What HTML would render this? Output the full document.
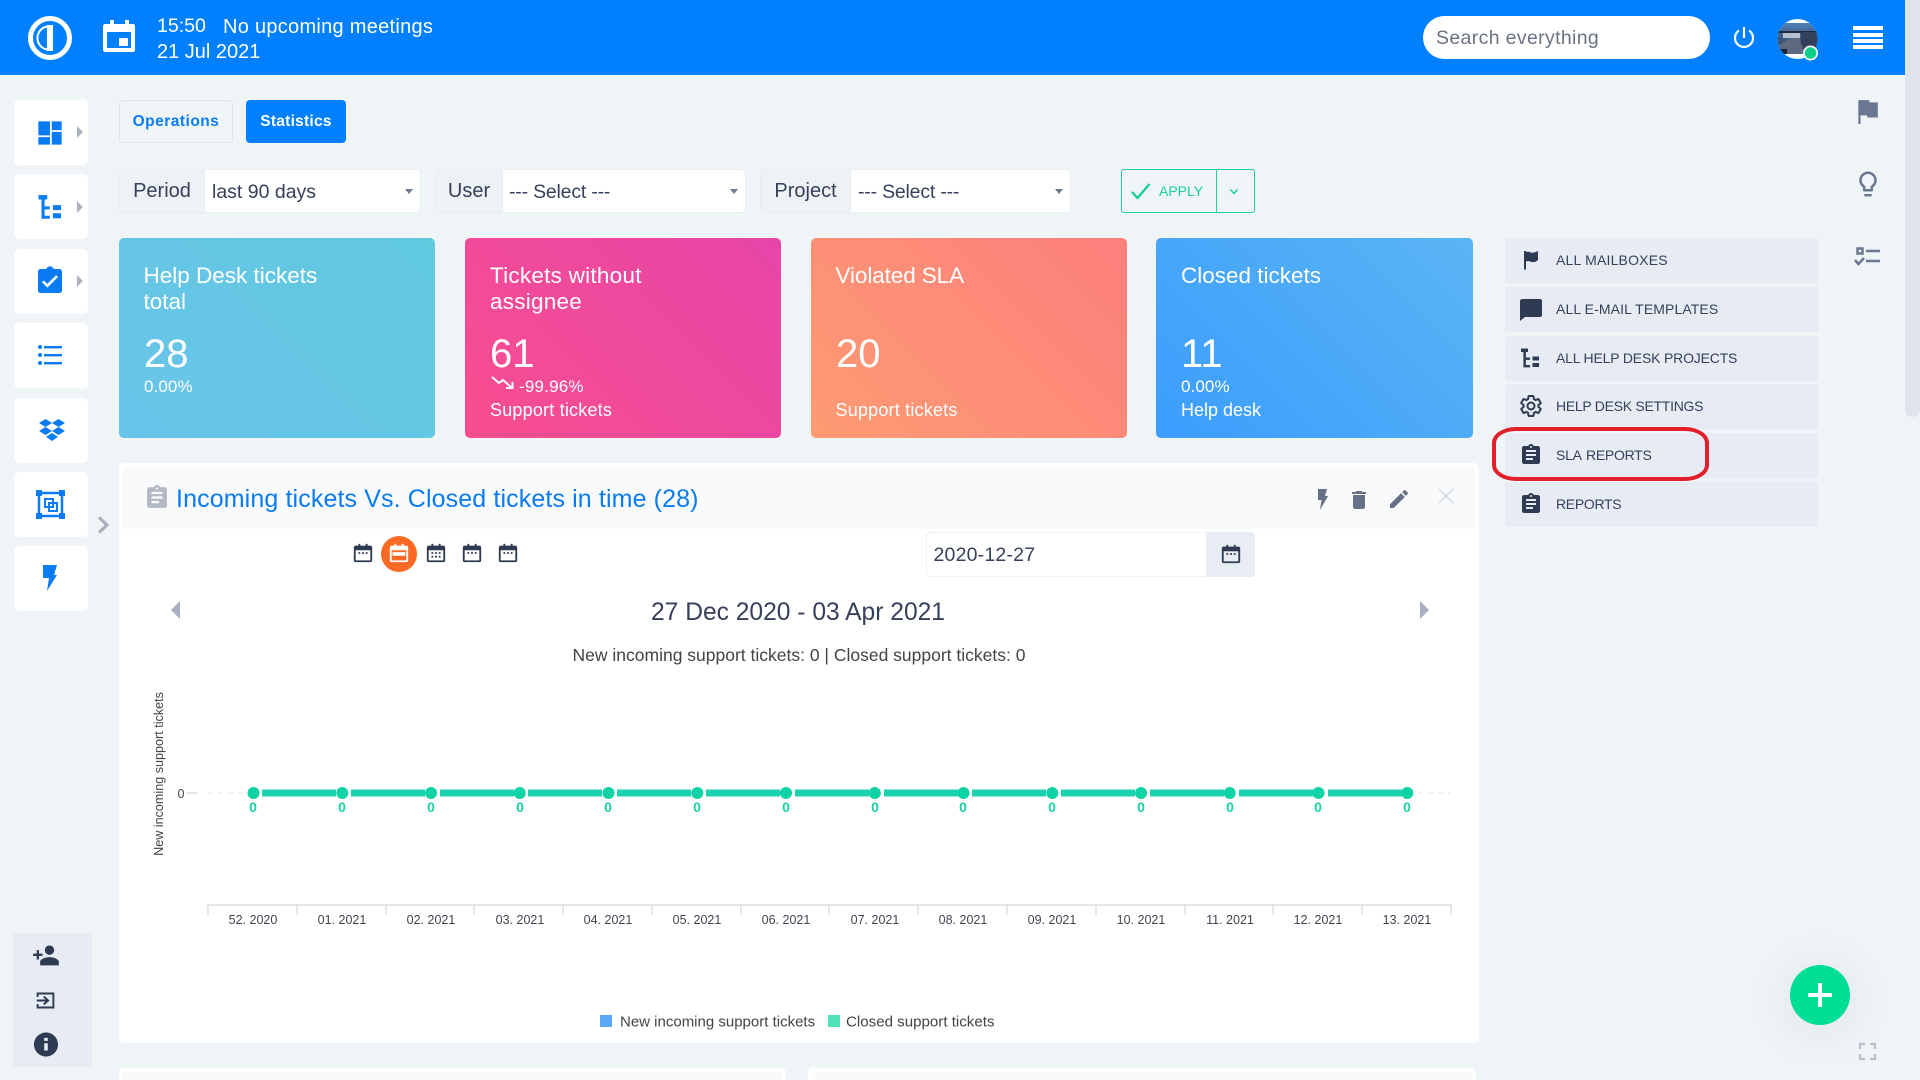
<!DOCTYPE html>
<html><head><meta charset="utf-8"><title>Dashboard</title>
<style>
*{box-sizing:border-box}
html,body{margin:0;padding:0;width:1920px;height:1080px;overflow:hidden;background:#eff4f7;font-family:"Liberation Sans",sans-serif;color:#2f3b52}
.a{position:absolute}
.t{position:absolute;white-space:nowrap;line-height:1}
svg{position:absolute;overflow:visible}
.side{position:absolute;left:14px;width:74px;height:65px;background:#fff;border-radius:5px}
.tri{position:absolute;left:77px;width:0;height:0;border-left:6px solid #adb3c1;border-top:6px solid transparent;border-bottom:6px solid transparent}
.card{position:absolute;top:238px;height:200px;width:316px;border-radius:5px;color:#fff}
.card .h{position:absolute;left:25px;top:24.500px;font-size:22.500px;line-height:26.500px;white-space:nowrap}
.card .v{position:absolute;left:25px;top:92.500px;font-size:40px;line-height:46px}
.card .p{position:absolute;left:25px;top:139px;font-size:17px;line-height:20px;white-space:nowrap;letter-spacing:.1px}
.card .s{position:absolute;left:25px;top:162px;font-size:18px;line-height:20px;white-space:nowrap;letter-spacing:.2px}
.lab{position:absolute;top:169px;height:44px;background:#eef2f6;border:1px solid #e8edf2;border-radius:4px 0 0 4px;font-size:20px;line-height:42px;text-align:center;color:#36405a}
.sel{position:absolute;top:169px;height:44px;background:#fff;border:1px solid #eaeef3;border-left:0;border-radius:0 4px 4px 0;font-size:19.500px;line-height:44px;padding-left:7px;color:#36405a;white-space:nowrap}
.sel i{position:absolute;right:7px;top:19px;width:0;height:0;border-top:5px solid #6f7b93;border-left:4.500px solid transparent;border-right:4.500px solid transparent}
.mi{position:absolute;left:1505px;width:313px;height:45px;background:#e7ebf3;border-radius:2px;font-size:14px;line-height:45px;padding-left:51px;color:#36405a;white-space:nowrap}
.mi svg{left:14px;top:10px}
.xl{position:absolute;top:913px;width:80px;text-align:center;font-size:12.500px;color:#3f4550;line-height:14px}
.zl{position:absolute;top:800px;width:20px;text-align:center;font-size:14px;font-weight:bold;color:#1ad1a5;line-height:14px}
</style></head>
<body>
<svg width="0" height="0" style="position:absolute">
<defs>
<symbol id="cal" viewBox="0 0 24 24"><path fill="#2f3b52" d="M4 4h3V2h2v2h6V2h2v2h3c1.100 0 2 .9 2 2v14c0 1.100-.9 2-2 2H4c-1.100 0-2-.9-2-2V6c0-1.100.9-2 2-2zm0 5v11h16V9H4z"/><path fill="#2f3b52" d="M7 11h2v2H7zM11 11h2v2h-2zM15 11h2v2h-2z"/></symbol>
<symbol id="asg" viewBox="0 0 24 24"><path d="M19 3h-4.180C14.400 1.840 13.300 1 12 1s-2.400.84-2.820 2H5c-1.100 0-2 .9-2 2v14c0 1.100.9 2 2 2h14c1.100 0 2-.9 2-2V5c0-1.100-.9-2-2-2zm-7 0c.55 0 1 .45 1 1s-.45 1-1 1-1-.45-1-1 .45-1 1-1zm2 14H7v-2h7v2zm3-4H7v-2h10v2zm0-4H7V7h10v2z"/></symbol>
<symbol id="tree" viewBox="0 0 24 24"><path d="M2 2.500h7V6H6.900v5.500H11v2.400H6.900V19H11v2.400H4.400V6H2zM13.500 10.500H20v4h-6.500zM13.500 17H20v4h-6.500z"/></symbol>
</defs></svg>

<!-- header -->
<div class="a" style="left:0;top:0;width:1905px;height:75px;background:#0080ff"></div>
<svg style="left:27px;top:15px" width="46" height="46" viewBox="0 0 46 46"><circle cx="23" cy="23" r="19.500" fill="none" stroke="#fff" stroke-width="5"/><path d="M20 11.500a11.700 11.700 0 0 0 0 23" fill="none" stroke="#fff" stroke-width="2"/><rect x="20" y="10" width="6" height="26" fill="#fff"/></svg>
<svg style="left:100px;top:18px" width="38" height="36" viewBox="0 0 38 36"><path fill="#fff" d="M5 6h5V2h4v4h11V2h4v4h4c1 0 2 1 2 2v24c0 1-1 2-2 2H5c-1 0-2-1-2-2V8c0-1 1-2 2-2zm2 8v16h24V14z"/><rect x="19" y="20" width="9" height="8" fill="#fff"/></svg>
<div class="t" style="left:157px;top:16.500px;font-size:19.500px;color:#fff">15:50</div>
<div class="t" style="left:223px;top:16.500px;font-size:20px;letter-spacing:.28px;color:#fff">No upcoming meetings</div>
<div class="t" style="left:157px;top:42px;font-size:20px;color:#fff">21 Jul 2021</div>
<div class="a" style="left:1423px;top:16px;width:287px;height:43px;background:#fff;border-radius:22px"></div>
<div class="t" style="left:1436px;top:29px;font-size:19.500px;letter-spacing:.35px;color:#6b7383">Search everything</div>
<svg style="left:1732px;top:25px" width="24" height="24" viewBox="0 0 24 24"><path d="M7 5.500a9 9 0 1 0 10 0" fill="none" stroke="#fff" stroke-width="2.200"/><path d="M12 2v11" stroke="#fff" stroke-width="2.200"/></svg>
<svg style="left:1777px;top:18px" width="42" height="44" viewBox="0 0 42 44"><defs><clipPath id="av"><circle cx="20.500" cy="21" r="20"/></clipPath><linearGradient id="sky" x1="0" y1="0" x2="0" y2="1"><stop offset="0" stop-color="#4f7fb8"/><stop offset="1" stop-color="#26364f"/></linearGradient></defs><g clip-path="url(#av)"><rect width="42" height="44" fill="#fff"/><rect y="5" width="42" height="31" fill="url(#sky)"/><rect y="13" width="42" height="2" fill="#1f2a40"/><rect x="6" y="15" width="17" height="5" fill="#b6c2d0"/><rect x="24" y="14" width="18" height="18" fill="#33405a"/><path d="M0 36V28l14-8h8l6 16z" fill="#5d6a80"/><rect x="0" y="31" width="10" height="5" fill="#1b2338"/></g><circle cx="33.500" cy="35" r="7.500" fill="#fff"/><circle cx="33.500" cy="35" r="5.800" fill="#0fcf8a"/></svg>
<div class="a" style="left:1853px;top:26px;width:30px;height:4px;background:#fff"></div>
<div class="a" style="left:1853px;top:32.500px;width:30px;height:4px;background:#fff"></div>
<div class="a" style="left:1853px;top:39px;width:30px;height:4px;background:#fff"></div>
<div class="a" style="left:1853px;top:45px;width:30px;height:4px;background:#fff"></div>

<!-- scrollbar -->
<div class="a" style="left:1905px;top:0;width:15px;height:417px;background:#dfe3ee;border-radius:0 0 8px 8px"></div>

<!-- left sidebar -->
<div class="side" style="top:100px"></div><div class="side" style="top:174px"></div><div class="side" style="top:249px"></div><div class="side" style="top:323px"></div><div class="side" style="top:398px"></div><div class="side" style="top:472px"></div><div class="side" style="top:546px"></div>
<div class="tri" style="top:126px"></div><div class="tri" style="top:201px"></div><div class="tri" style="top:275px"></div>
<svg style="left:36px;top:119px" width="28" height="28" viewBox="0 0 24 24" fill="#0a7bf2"><path d="M2 2h10v12H2zM2 15.500h10V22H2zM13.500 2H22v7.500h-8.500zM13.500 11H22v11h-8.500z"/></svg>
<svg style="left:35.500px;top:192px" width="30" height="30" viewBox="0 0 24 24" fill="#0a7bf2"><use href="#tree"/></svg>
<svg style="left:34px;top:265px" width="32" height="32" viewBox="0 0 24 24" fill="#0a7bf2"><path d="M19 3h-4.180C14.400 1.840 13.300 1 12 1s-2.400.84-2.820 2H5c-1.100 0-2 .9-2 2v14c0 1.100.9 2 2 2h14c1.100 0 2-.9 2-2V5c0-1.100-.9-2-2-2zm-9 14l-4-4 1.410-1.410L10 14.170l6.590-6.590L18 9z"/></svg>
<svg style="left:38px;top:345px" width="24" height="20" viewBox="0 0 24 20" fill="#0a7bf2"><circle cx="2" cy="2" r="2"/><circle cx="2" cy="10" r="2"/><circle cx="2" cy="18" r="2"/><rect x="6" y="1" width="18" height="2.400"/><rect x="6" y="9" width="18" height="2.400"/><rect x="6" y="17" width="18" height="2.400"/></svg>
<svg style="left:39px;top:419px" width="26" height="22" viewBox="0 0 26 22" fill="#0a7bf2"><path d="M6.500 0L13 4l-6.500 4L0 4zM19.500 0L26 4l-6.500 4L13 4zM6.500 8L13 12l-6.500 4L0 12zM19.500 8L26 12l-6.500 4L13 12zM13 14l6 3.800L13 22l-6-4.200z"/></svg>
<svg style="left:36px;top:490px" width="30" height="30" viewBox="0 0 30 30" fill="none" stroke="#0a7bf2"><rect x="3" y="3" width="23" height="23" stroke-width="2.500"/><rect x="9" y="9" width="8" height="8" stroke-width="2"/><rect x="13" y="13" width="8" height="8" stroke-width="2"/><g fill="#0a7bf2" stroke="none"><rect x="0" y="0" width="6" height="6"/><rect x="23" y="0" width="6" height="6"/><rect x="0" y="23" width="6" height="6"/><rect x="23" y="23" width="6" height="6"/></g></svg>
<svg style="left:43px;top:565px" width="14" height="26" viewBox="0 0 14 26" fill="#0a7bf2"><path d="M0 0h14l-3 10h3L4 26l2-13H0z"/></svg>
<svg style="left:97px;top:516px" width="14" height="18" viewBox="0 0 14 18" fill="none" stroke="#a9adbb" stroke-width="3"><path d="M2 1.500L10 9l-8 7.500"/></svg>

<div class="a" style="left:13px;top:933px;width:79px;height:134px;background:#e7ebf3;border-radius:3px"></div>
<svg style="left:32px;top:943px" width="28" height="26" viewBox="0 0 24 22" fill="#2f3b52"><path d="M15 10c2.210 0 4-1.790 4-4s-1.790-4-4-4-4 1.790-4 4 1.790 4 4 4zm-9-1V6H4v3H1v2h3v3h2v-3h3V9zm9 3c-2.670 0-8 1.340-8 4v3h16v-3c0-2.660-5.330-4-8-4z"/></svg>
<svg style="left:35px;top:990px" width="21" height="21" viewBox="0 0 24 24" fill="none" stroke="#2f3b52" stroke-width="2.200"><path d="M3 8V4h18v16H3v-4"/><path d="M2 12h12M10 7.500l5 4.500-5 4.500"/></svg>
<svg style="left:34px;top:1032px" width="24" height="25" viewBox="2 2 20 20" fill="#2f3b52"><path d="M12 2C6.480 2 2 6.480 2 12s4.480 10 10 10 10-4.480 10-10S17.520 2 12 2zm1.500 15h-3v-6h3zm0-8h-3V6.500h3z"/></svg>

<!-- tabs -->
<div class="a" style="left:119px;top:100px;width:114px;height:43px;border:1px solid #dfe5ec;border-radius:4px;color:#0a7bf2;font-size:15.500px;font-weight:bold;line-height:42px;text-align:center;letter-spacing:.5px">Operations</div>
<div class="a" style="left:246px;top:100px;width:100px;height:43px;background:#0080ff;border-radius:4px;color:#fff;font-size:15.500px;font-weight:bold;line-height:44px;text-align:center;letter-spacing:.25px">Statistics</div>

<!-- filters -->
<div class="lab" style="left:119px;width:86px">Period</div><div class="sel" style="left:205px;width:216px">last 90 days<i></i></div>
<div class="lab" style="left:435px;width:68px">User</div><div class="sel" style="left:503px;width:243px;padding-left:6px;letter-spacing:-.2px">--- Select ---<i></i></div>
<div class="lab" style="left:760px;width:91px">Project</div><div class="sel" style="left:851px;width:220px;letter-spacing:-.2px">--- Select ---<i></i></div>
<div class="a" style="left:1121px;top:169px;width:134px;height:44px;border:1px solid #1ecf9b;border-radius:3px"></div>
<div class="a" style="left:1216px;top:169px;width:1px;height:44px;background:#1ecf9b"></div>
<svg style="left:1131px;top:182px" width="20" height="18" viewBox="0 0 20 18" fill="none" stroke="#16cf95" stroke-width="2.300"><path d="M1 10l5.500 6L18.500 2"/></svg>
<div class="t" style="left:1159px;top:184px;font-size:14px;color:#1bcf9a">APPLY</div>
<svg style="left:1229px;top:188px" width="10" height="8" viewBox="0 0 10 8" fill="none" stroke="#1ecf9b" stroke-width="1.500"><path d="M1.500 1.500L5 5.500l3.500-4"/></svg>

<!-- cards -->
<div class="card" style="left:119px;background:linear-gradient(45deg,#69c4ea,#61cadf)"><div class="h" style="left:24.500px">Help Desk tickets<br>total</div><div class="v">28</div><div class="p">0.00%</div></div>
<div class="card" style="left:465px;background:linear-gradient(45deg,#f84e8f,#e745a9)"><div class="h" style="letter-spacing:.25px">Tickets without<br>assignee</div><div class="v">61</div>
<svg style="left:26px;top:137px" width="24" height="16" viewBox="0 0 24 16" fill="none" stroke="#fff" stroke-width="2"><path d="M1 2l7 6 4-3 9 8M15 13h6.500V7"/></svg><div class="p" style="left:54px;letter-spacing:.2px">-99.96%</div><div class="s">Support tickets</div></div>
<div class="card" style="left:811px;background:linear-gradient(45deg,#fd9b72,#fd7f7d)"><div class="h" style="left:24.500px;letter-spacing:-.1px">Violated SLA</div><div class="v">20</div><div class="s" style="left:24.500px">Support tickets</div></div>
<div class="card" style="left:1156px;width:317px;background:linear-gradient(45deg,#3b9dfe,#5ab5f3)"><div class="h">Closed tickets</div><div class="v">11</div><div class="p">0.00%</div><div class="s" style="letter-spacing:0">Help desk</div></div>

<!-- right menu -->
<div class="mi" style="top:238px;letter-spacing:.2px"><svg width="24" height="24" viewBox="0 0 24 24" fill="#2f3b52"><path d="M5 3h2v1c3-1.500 5 1.500 8 .5 2-.5 3-1 4-1.500v9c-2 2-4 2.500-6 2-2-.5-4-1.500-6-.5v8H5z"/></svg>ALL MAILBOXES</div>
<div class="mi" style="top:287px;line-height:44px;letter-spacing:.1px"><svg width="24" height="24" viewBox="0 0 24 24" fill="#2f3b52"><path d="M3.500 2H21c1 0 2 1 2 2v14c0 1-1 2-2 2H6l-5 4V4c0-1 1-2 2.500-2z"/></svg>ALL E-MAIL TEMPLATES</div>
<div class="mi" style="top:336px;line-height:44px;letter-spacing:-.18px"><svg width="24" height="24" viewBox="0 0 24 24" fill="#2f3b52"><use href="#tree"/></svg>ALL HELP DESK PROJECTS</div>
<div class="mi" style="top:384px;letter-spacing:-.28px"><svg width="24" height="24" viewBox="0 0 24 24"><path fill="none" stroke="#2f3b52" stroke-width="2" d="M19.430 12.980c.04-.32.07-.64.07-.98s-.03-.66-.07-.98l2.110-1.650c.19-.15.24-.42.12-.64l-2-3.460c-.12-.22-.39-.3-.61-.22l-2.490 1c-.52-.4-1.080-.73-1.690-.98l-.38-2.650C14.460 2.180 14.250 2 14 2h-4c-.25 0-.46.18-.49.42l-.38 2.650c-.61.25-1.170.59-1.690.98l-2.490-1c-.23-.09-.49 0-.61.22l-2 3.460c-.13.22-.07.49.12.64l2.110 1.650c-.04.32-.07.65-.07.98s.03.66.07.98l-2.110 1.650c-.19.15-.24.42-.12.64l2 3.460c.12.22.39.3.61.22l2.490-1c.52.4 1.080.73 1.690.98l.38 2.650c.03.24.24.42.49.42h4c.25 0 .46-.18.49-.42l.38-2.650c.61-.25 1.170-.59 1.690-.98l2.490 1c.23.09.49 0 .61-.22l2-3.460c.12-.22.07-.49-.12-.64z"/><circle cx="12" cy="12" r="3.500" fill="none" stroke="#2f3b52" stroke-width="2"/></svg>HELP DESK SETTINGS</div>
<div class="mi" style="top:433px;letter-spacing:-.27px;word-spacing:1.500px"><svg width="24" height="24" viewBox="0 0 24 24" fill="#2f3b52"><use href="#asg"/></svg>SLA REPORTS</div>
<div class="mi" style="top:482px;line-height:44px;letter-spacing:-.3px"><svg width="24" height="24" viewBox="0 0 24 24" fill="#2f3b52"><use href="#asg"/></svg>REPORTS</div>
<div class="a" style="left:1492px;top:426.500px;width:217px;height:54px;border:4.500px solid #e2202c;border-radius:24px/16px"></div>

<!-- right rail -->
<svg style="left:1854px;top:98px" width="26" height="26" viewBox="0 0 24 24" fill="#6b7690"><path d="M14.400 4L14 2H4v22h2v-8h6l.4 2H22V4z"/></svg>
<svg style="left:1853px;top:169px" width="30" height="30" viewBox="0 0 24 24" fill="#6b7690"><path d="M9 21c0 .55.45 1 1 1h4c.55 0 1-.45 1-1v-1H9zm3-19C8.140 2 5 5.140 5 9c0 2.380 1.190 4.470 3 5.740V17c0 .55.45 1 1 1h6c.55 0 1-.45 1-1v-2.260c1.810-1.270 3-3.360 3-5.740 0-3.860-3.140-7-7-7zm2.850 11.100l-.85.6V16h-4v-2.300l-.85-.6C7.800 12.160 7 10.630 7 9c0-2.760 2.240-5 5-5s5 2.240 5 5c0 1.630-.8 3.160-2.150 4.100z"/></svg>
<svg style="left:1854px;top:247px" width="26" height="20" viewBox="0 0 26 20" fill="none" stroke="#6b7690" stroke-width="2.500"><rect x="3.500" y="1.500" width="5" height="5"/><path d="M12 4h14M12 14h14"/><path d="M1 13l3.500 4L10 11"/></svg>
<svg style="left:1859px;top:1043px" width="17" height="17" viewBox="0 0 17 17" fill="none" stroke="#b9bfcc" stroke-width="2.200"><path d="M1 6V1h5M11 1h5v5M1 11v5h5M16 11v5h-5"/></svg>

<!-- main panel -->
<div class="a" style="left:119px;top:463px;width:1360px;height:580px;background:#fff;border-radius:5px"></div>
<div class="a" style="left:122px;top:467px;width:1352px;height:62px;background:#f8fafb"></div>
<svg style="left:146px;top:485px" width="22" height="24" viewBox="2 1 20 21" preserveAspectRatio="none" fill="#b2b8c4"><use href="#asg" width="24" height="24"/></svg>
<div class="t" style="left:176px;top:486.500px;font-size:25px;letter-spacing:.12px;color:#0a7bf2">Incoming tickets Vs. Closed tickets in time (28)</div>
<svg style="left:1312px;top:488px" width="20" height="24" viewBox="0 0 14 24" fill="#667087"><path d="M3 1h9l-2 7h3L5 22l1.500-10H3z"/></svg>
<svg style="left:1347px;top:488px" width="24" height="24" viewBox="0 0 24 24" fill="#667087"><path d="M6 19c0 1.100.9 2 2 2h8c1.100 0 2-.9 2-2V7H6zM19 4h-3.500l-1-1h-5l-1 1H5v2h14z"/></svg>
<svg style="left:1387px;top:487px" width="24" height="24" viewBox="0 0 24 24" fill="#667087"><path d="M3 17.250V21h3.750L17.810 9.940l-3.750-3.750zM20.710 7.040c.39-.39.39-1.020 0-1.410l-2.340-2.340c-.39-.39-1.020-.39-1.410 0l-1.830 1.830 3.750 3.750z"/></svg>
<svg style="left:1438px;top:488px" width="16" height="16" viewBox="0 0 16 16" stroke="#d9dde5" stroke-width="1.600"><path d="M1 1l14 14M15 1L1 15"/></svg>

<svg style="left:352px;top:542px" width="22" height="22" viewBox="0 0 24 24"><use href="#cal"/></svg>
<div class="a" style="left:381px;top:536px;width:36px;height:36px;border-radius:50%;background:#fa6a25"></div>
<svg style="left:388px;top:542px" width="22" height="22" viewBox="0 0 24 24" fill="#fff"><path d="M4 4h3V2h2v2h6V2h2v2h3c1.100 0 2 .9 2 2v14c0 1.100-.9 2-2 2H4c-1.100 0-2-.9-2-2V6c0-1.100.9-2 2-2zm0 5v11h16V9zm1 2h14v4H5z"/></svg>
<svg style="left:425px;top:542px" width="22" height="22" viewBox="0 0 24 24"><use href="#cal"/><path fill="#2f3b52" d="M7 15h2v2H7zM11 15h2v2h-2zM15 15h2v2h-2z"/></svg>
<svg style="left:461px;top:542px" width="22" height="22" viewBox="0 0 24 24"><use href="#cal"/></svg>
<svg style="left:497px;top:542px" width="22" height="22" viewBox="0 0 24 24"><use href="#cal"/></svg>

<div class="a" style="left:926px;top:532px;width:329px;height:45px;border:1px solid #edf0f4;border-radius:4px;background:#fff"></div>
<div class="a" style="left:1206px;top:532px;width:49px;height:45px;background:#e8ecf3;border-radius:0 4px 4px 0"></div>
<svg style="left:1220px;top:543px" width="22" height="22" viewBox="0 0 24 24"><use href="#cal"/></svg>
<div class="t" style="left:933.500px;top:546px;font-size:19.500px;letter-spacing:.2px;color:#36405a">2020-12-27</div>

<div class="t" style="left:498px;width:600px;top:601px;text-align:center;font-size:24.600px;color:#36405a">27 Dec 2020 - 03 Apr 2021</div>
<div class="a" style="left:171px;top:601px;width:0;height:0;border-right:9px solid #a9afbe;border-top:9px solid transparent;border-bottom:9px solid transparent"></div>
<div class="a" style="left:1420px;top:601px;width:0;height:0;border-left:9px solid #a9afbe;border-top:9px solid transparent;border-bottom:9px solid transparent"></div>
<div class="t" style="left:399px;width:800px;top:647px;text-align:center;font-size:17.500px;color:#444">New incoming support tickets: 0 | Closed support tickets: 0</div>

<!-- chart -->
<svg style="left:0;top:0" width="1920" height="1080">
<line x1="187" y1="793" x2="197" y2="793" stroke="#ccc"/>
<line x1="208" y1="793" x2="1450" y2="793" stroke="#e6e6e6" stroke-dasharray="5 5"/>
<g stroke="#1bd1ae" stroke-width="7"><path d="M262 793h74M351 793h74M440 793h74M528 793h74M617 793h74M706 793h74M795 793h74M884 793h74M972 793h74M1061 793h74M1150 793h74M1239 793h74M1328 793h74"/></g>
<g fill="#0fd3a4"><circle cx="253.500" cy="793" r="6"/><circle cx="342.300" cy="793" r="6"/><circle cx="431" cy="793" r="6"/><circle cx="519.800" cy="793" r="6"/><circle cx="608.500" cy="793" r="6"/><circle cx="697.300" cy="793" r="6"/><circle cx="786" cy="793" r="6"/><circle cx="874.800" cy="793" r="6"/><circle cx="963.500" cy="793" r="6"/><circle cx="1052.300" cy="793" r="6"/><circle cx="1141" cy="793" r="6"/><circle cx="1229.800" cy="793" r="6"/><circle cx="1318.500" cy="793" r="6"/><circle cx="1407.300" cy="793" r="6"/></g>
<path d="M208 915v-10H1451v10M297 905v10M386 905v10M474 905v10M563 905v10M652 905v10M741 905v10M829 905v10M918 905v10M1007 905v10M1096 905v10M1185 905v10M1273 905v10M1362 905v10" fill="none" stroke="#d5d8dc" stroke-width="1.300"/>
<text transform="translate(163,774) rotate(-90)" text-anchor="middle" font-family="Liberation Sans" font-size="12.600" fill="#444">New incoming support tickets</text>
<rect x="600" y="1015" width="12" height="12" fill="#5aa9f8"/><rect x="828" y="1015" width="12" height="12" fill="#4fe3b8"/>
<text x="620" y="1026.500" font-family="Liberation Sans" font-size="15" fill="#444">New incoming support tickets</text>
<text x="846" y="1026.500" font-family="Liberation Sans" font-size="15.100" fill="#444">Closed support tickets</text>
<text x="181" y="798" text-anchor="middle" font-family="Liberation Sans" font-size="12.500" fill="#444">0</text>
</svg>
<div class="zl" style="left:243px">0</div><div class="zl" style="left:332px">0</div><div class="zl" style="left:421px">0</div><div class="zl" style="left:510px">0</div><div class="zl" style="left:598px">0</div><div class="zl" style="left:687px">0</div><div class="zl" style="left:776px">0</div><div class="zl" style="left:865px">0</div><div class="zl" style="left:953px">0</div><div class="zl" style="left:1042px">0</div><div class="zl" style="left:1131px">0</div><div class="zl" style="left:1220px">0</div><div class="zl" style="left:1308px">0</div><div class="zl" style="left:1397px">0</div>
<div class="xl" style="left:213px">52. 2020</div><div class="xl" style="left:302px">01. 2021</div><div class="xl" style="left:391px">02. 2021</div><div class="xl" style="left:480px">03. 2021</div><div class="xl" style="left:568px">04. 2021</div><div class="xl" style="left:657px">05. 2021</div><div class="xl" style="left:746px">06. 2021</div><div class="xl" style="left:835px">07. 2021</div><div class="xl" style="left:923px">08. 2021</div><div class="xl" style="left:1012px">09. 2021</div><div class="xl" style="left:1101px">10. 2021</div><div class="xl" style="left:1190px">11. 2021</div><div class="xl" style="left:1278px">12. 2021</div><div class="xl" style="left:1367px">13. 2021</div>

<!-- lower panels -->
<div class="a" style="left:119px;top:1068px;width:667px;height:12px;background:#fff;border-radius:5px 5px 0 0"></div>
<div class="a" style="left:123px;top:1072px;width:659px;height:8px;background:#f8fafb"></div>
<div class="a" style="left:808px;top:1068px;width:668px;height:12px;background:#fff;border-radius:5px 5px 0 0"></div>
<div class="a" style="left:812px;top:1072px;width:660px;height:8px;background:#f8fafb"></div>

<!-- fab -->
<div class="a" style="left:1790px;top:965px;width:60px;height:60px;border-radius:50%;background:#00de95;box-shadow:0 4px 50px rgba(0,0,0,.09)"></div>
<div class="a" style="left:1808px;top:993px;width:24px;height:4px;background:#fff"></div>
<div class="a" style="left:1818px;top:983px;width:4px;height:24px;background:#fff"></div>
</body></html>
